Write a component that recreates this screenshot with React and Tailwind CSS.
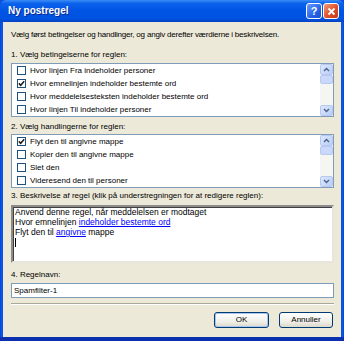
import React from 'react';

// Afkrydsningsfelt i listen
function Check({ checked }) {
  return (
    <div className="w-[9px] h-[9px] shrink-0 border border-[#1c5180] bg-white flex items-center justify-center">
      {checked && (
        <svg width="7" height="7" viewBox="0 0 7 7">
          <path d="M0.8 3.4 L2.7 5.3 L6.2 1.3" fill="none" stroke="#1a1a1a" strokeWidth="1.5" />
        </svg>
      )}
    </div>
  );
}

function ScrollBtn({ up }) {
  return (
    <div className="h-[11px] rounded-[2px] border border-[#b7c9f3] bg-[linear-gradient(135deg,#dde8fe,#b9cdf8)] flex items-center justify-center">
      <svg width="7" height="5" viewBox="0 0 7 5">
        <path d={up ? 'M1 4 L3.5 1.5 L6 4' : 'M1 1 L3.5 3.5 L6 1'} fill="none" stroke="#4d6185" strokeWidth="1.4" />
      </svg>
    </div>
  );
}

function Scrollbar() {
  return (
    <div className="w-[13px] shrink-0 flex flex-col bg-[#f5f5f1]">
      <ScrollBtn up />
      <div className="h-[9px] rounded-[2px] border border-[#b7c9f3] bg-[#c9d8fb]" />
      <div className="flex-1" />
      <ScrollBtn />
    </div>
  );
}

function Liste({ items }) {
  return (
    <div className="h-[54px] border border-[#7f9db9] bg-white flex overflow-hidden">
      <div className="flex-1 min-w-0 overflow-hidden">
        {items.map(([label, checked], i) => (
          <div key={i} className="h-[13px] flex items-center pl-[5px] gap-[4px]">
            <Check checked={checked} />
            <span className="whitespace-nowrap">{label}</span>
          </div>
        ))}
      </div>
      <Scrollbar />
    </div>
  );
}

function Knap({ children, standard }) {
  return (
    <button
      className={`h-[16px] rounded-[3px] border border-[#003c74] bg-[linear-gradient(180deg,#ffffff,#f0efe9_60%,#dcd9cc)] flex items-center justify-center ${
        standard ? 'w-[55px] shadow-[inset_0_0_0_1px_#a9c4f2]' : 'w-[54px]'
      }`}
    >
      {children}
    </button>
  );
}

export default function App() {
  const betingelser = [
    ['Hvor linjen Fra indeholder personer', false],
    ['Hvor emnelinjen indeholder bestemte ord', true],
    ['Hvor meddelelsesteksten indeholder bestemte ord', false],
    ['Hvor linjen Til indeholder personer', false],
  ];
  const handlinger = [
    ['Flyt den til angivne mappe', true],
    ['Kopier den til angivne mappe', false],
    ['Slet den', false],
    ['Videresend den til personer', false],
  ];

  return (
    <div className="w-[344px] h-[341px] flex flex-col overflow-hidden bg-[#0a4fe0] font-['Liberation_Sans',Arial,sans-serif] text-[8px] leading-[10px] text-black">
      {/* Titellinje */}
      <div className="h-[22px] shrink-0 rounded-t-[6px] bg-[linear-gradient(180deg,#3d8df7_0%,#0d62ec_15%,#0055e5_45%,#0052e0_85%,#0543c4_100%)] flex items-center pl-[8px] pr-[5px]">
        <span className="flex-1 text-white font-bold text-[10px] [text-shadow:1px_1px_0_#0a2a8a]">Ny postregel</span>
        <div className="flex gap-[1px]">
          <div className="w-[16px] h-[16px] rounded-[3px] border border-white bg-[linear-gradient(135deg,#6b9bff,#2663e8_60%,#1a4fd0)] flex items-center justify-center text-white font-bold text-[11px] leading-none">
            ?
          </div>
          <div className="w-[16px] h-[16px] rounded-[3px] border border-white bg-[linear-gradient(135deg,#f09a7a,#e0502a_55%,#c23a14)] flex items-center justify-center">
            <svg width="9" height="9" viewBox="0 0 9 9">
              <path d="M1.5 1.5 L7.5 7.5 M7.5 1.5 L1.5 7.5" stroke="white" strokeWidth="1.8" />
            </svg>
          </div>
        </div>
      </div>

      {/* Indhold */}
      <div className="flex-1 px-[3px] bg-[linear-gradient(90deg,#0b3fc9,#0a55e8_1px,#0a55e8_calc(100%-1px),#0b3fc9)] flex">
        <div className="flex-1 bg-[#ece9d8] pl-[8px] pr-[7px] pt-[8px] flex flex-col">
          <p className="whitespace-nowrap tracking-[-0.2px]">Vælg først betingelser og handlinger, og angiv derefter værdierne i beskrivelsen.</p>

          <p className="mt-[10px]">1. Vælg betingelserne for reglen:</p>
          <div className="mt-[3px]">
            <Liste items={betingelser} />
          </div>

          <p className="mt-[5px]">2. Vælg handlingerne for reglen:</p>
          <div className="mt-[2px]">
            <Liste items={handlinger} />
          </div>

          <p className="mt-[3px] whitespace-nowrap">3. Beskrivelse af regel (klik på understregningen for at redigere reglen):</p>
          <div className="mt-[4px] h-[58px] bg-white border-2 border-t-[#8c8c8c] border-l-[#8c8c8c] border-r-[#e8e6dc] border-b-[#e8e6dc] shadow-[inset_1px_1px_0_#404040] pl-[2px] text-[8.5px]">
            <p>Anvend denne regel, når meddelelsen er modtaget</p>
            <p>
              Hvor emnelinjen <span className="text-[#0000ff] underline">indeholder bestemte ord</span>
            </p>
            <p>
              Flyt den til <span className="text-[#0000ff] underline">angivne</span> mappe
            </p>
            <div className="h-[10px] flex items-center">
              <div className="w-[1px] h-[9px] bg-black" />
            </div>
          </div>

          <p className="mt-[7px]">4. Regelnavn:</p>
          <div className="mt-[3px] h-[15px] border border-[#7f9db9] bg-white pl-[2px] flex items-center">
            Spamfilter-1
          </div>

          <div className="mt-[5px] border-t border-t-[#aca899] border-b border-b-white" />

          <div className="mt-[7px] flex justify-end gap-[10px] pr-[1px]">
            <Knap standard>OK</Knap>
            <Knap>Annuller</Knap>
          </div>
        </div>
      </div>
      <div className="h-[4px] shrink-0 bg-[#0a30b0]" />
    </div>
  );
}
